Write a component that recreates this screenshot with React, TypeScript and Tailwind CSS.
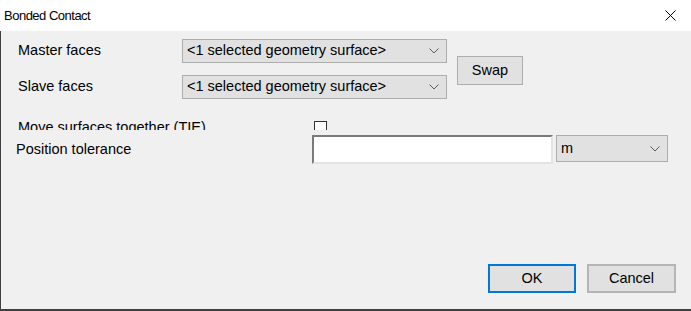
import React from "react";

const Chevron = () => (
  <svg width="10" height="6" viewBox="0 0 10 6" className="shrink-0">
    <polyline points="0.5,0.5 5,5 9.5,0.5" fill="none" stroke="#5a5a5a" strokeWidth="1" />
  </svg>
);

const Combo = ({value, className}: {value: string; className: string}) => (
  <div
    className={`flex items-center justify-between border border-[#adadad] bg-[#e1e1e1] pl-[4px] pr-[7px] text-black ${className}`}
  >
    <span className="whitespace-nowrap">{value}</span>
    <Chevron />
  </div>
);

const Button = ({label, primary}: {label: string; primary?: boolean}) => (
  <button
    type="button"
    className={`flex h-[29px] items-center justify-center bg-[#e1e1e1] text-black ${
      primary ? "w-[88px] border-2 border-[#0078d7]" : "w-[89px] border-2 border-[#b5b5b5]"
    }`}
  >
    {label}
  </button>
);

export default function App() {
  return (
    <div
      className="flex h-[311px] w-[691px] flex-col bg-[#f0f0f0] text-[14.5px] text-black"
      style={{fontFamily: '"Liberation Sans", Arial, sans-serif'}}
    >
      {/* title bar */}
      <div className="flex h-[31px] shrink-0 items-center justify-between bg-white pl-[4px] pr-[15px]">
        <span className="text-[13px] tracking-[-0.5px] text-black">Bonded Contact</span>
        <svg width="11" height="11" viewBox="0 0 11 11">
          <path d="M0.5 0.5 L10.5 10.5 M10.5 0.5 L0.5 10.5" stroke="#000" strokeWidth="1" />
        </svg>
      </div>

      <div className="flex flex-1 flex-col border-b-2 border-l border-[#3f3f3f]">
        {/* master / slave faces */}
        <div className="mt-[8px] flex items-center">
          <div className="flex flex-col gap-[12px]">
            <div className="flex items-center">
              <span className="w-[181px] pl-[17px]">Master faces</span>
              <Combo value="<1 selected geometry surface>" className="h-[24px] w-[265px]" />
            </div>
            <div className="flex items-center">
              <span className="w-[181px] pl-[17px]">Slave faces</span>
              <Combo value="<1 selected geometry surface>" className="h-[24px] w-[265px]" />
            </div>
          </div>
          <div className="ml-[10px] mt-[3px] flex h-[29px] w-[66px] items-center justify-center border border-[#adadad] bg-[#e1e1e1]">
            Swap
          </div>
        </div>

        {/* checkbox row, cut off by the row below */}
        <div className="mt-[20px] flex h-[11px] items-start overflow-hidden">
          <span className="w-[313px] whitespace-nowrap pl-[17px] leading-[17px]">
            Move surfaces together (TIE)
          </span>
          <div className="mt-[2px] h-[13px] w-[13px] shrink-0 border border-[#333] bg-white" />
        </div>

        {/* position tolerance */}
        <div className="mt-[5px] flex items-start">
          <span className="w-[311px] pl-[15px] pt-[4px]">Position tolerance</span>
          <div className="h-[29px] w-[241px] border-2 border-b-[#e3e3e3] border-l-[#7a7a7a] border-r-[#e3e3e3] border-t-[#7a7a7a] bg-white" />
          <Combo value="m" className="ml-[3px] h-[27px] w-[112px]" />
        </div>

        {/* footer buttons */}
        <div className="mt-auto mb-[16px] flex justify-end gap-[11px] pr-[15px]">
          <Button label="OK" primary />
          <Button label="Cancel" />
        </div>
      </div>
    </div>
  );
}
